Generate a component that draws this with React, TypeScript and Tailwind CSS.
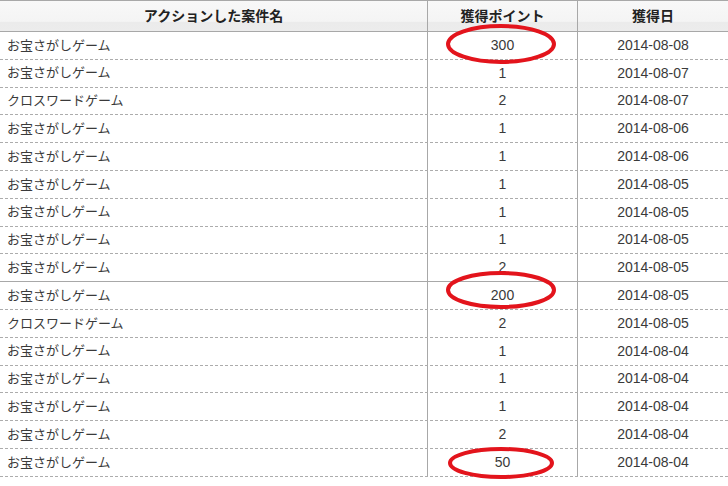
import React from 'react';

interface Row {
  name: string;
  point: string;
  date: string;
  solid?: boolean;
}

const rows: Row[] = [
  { name: 'お宝さがしゲーム', point: '300', date: '2014-08-08' },
  { name: 'お宝さがしゲーム', point: '1', date: '2014-08-07' },
  { name: 'クロスワードゲーム', point: '2', date: '2014-08-07' },
  { name: 'お宝さがしゲーム', point: '1', date: '2014-08-06' },
  { name: 'お宝さがしゲーム', point: '1', date: '2014-08-06' },
  { name: 'お宝さがしゲーム', point: '1', date: '2014-08-05' },
  { name: 'お宝さがしゲーム', point: '1', date: '2014-08-05' },
  { name: 'お宝さがしゲーム', point: '1', date: '2014-08-05' },
  { name: 'お宝さがしゲーム', point: '2', date: '2014-08-05', solid: true },
  { name: 'お宝さがしゲーム', point: '200', date: '2014-08-05' },
  { name: 'クロスワードゲーム', point: '2', date: '2014-08-05' },
  { name: 'お宝さがしゲーム', point: '1', date: '2014-08-04' },
  { name: 'お宝さがしゲーム', point: '1', date: '2014-08-04' },
  { name: 'お宝さがしゲーム', point: '1', date: '2014-08-04' },
  { name: 'お宝さがしゲーム', point: '2', date: '2014-08-04' },
  { name: 'お宝さがしゲーム', point: '50', date: '2014-08-04' },
];

// red marker circles drawn over the points column
const marks = [
  { cx: 501, cy: 44, rx: 53, ry: 18 },
  { cx: 501, cy: 290, rx: 53, ry: 17 },
  { cx: 501, cy: 463, rx: 51, ry: 14 },
];

const App: React.FC = () => {
  return (
    <div className="relative w-[728px] h-[486px] bg-white overflow-hidden font-['Liberation_Sans','Noto_Sans_CJK_JP',sans-serif] text-[#3a3a3a]">
      {/* header */}
      <div className="flex h-[32px] border-y border-[#a8a8a8] bg-[linear-gradient(#f8f8f8_0%,#f4f4f4_68%,#ebebeb_70%,#ececec_100%)] font-bold text-[14px] text-[#222]">
        <div className="w-[428px] border-r border-[#a8a8a8] flex items-center justify-center">アクションした案件名</div>
        <div className="w-[150px] border-r border-[#a8a8a8] flex items-center justify-center">獲得ポイント</div>
        <div className="w-[150px] flex items-center justify-center">獲得日</div>
      </div>

      {rows.map((row, i) => (
        <div
          key={i}
          className={
            row.solid
              ? 'flex h-[27.8px] border-b border-solid border-[#a8a8a8]'
              : 'flex h-[27.8px] border-b border-dashed border-[#acacac]'
          }
        >
          <div className="w-[428px] border-r border-solid border-[#a8a8a8] flex items-center pl-[7px] text-[13px]">
            {row.name}
          </div>
          <div className="w-[150px] border-r border-solid border-[#a8a8a8] flex items-center justify-center text-[14px]">
            {row.point}
          </div>
          <div className="w-[150px] flex items-center justify-center text-[14px]">{row.date}</div>
        </div>
      ))}

      <svg className="absolute left-0 top-0 pointer-events-none" width="728" height="486">
        {marks.map((m, i) => (
          <ellipse key={i} cx={m.cx} cy={m.cy} rx={m.rx} ry={m.ry} fill="none" stroke="#e3141c" strokeWidth="4" />
        ))}
      </svg>
    </div>
  );
};

export default App;
